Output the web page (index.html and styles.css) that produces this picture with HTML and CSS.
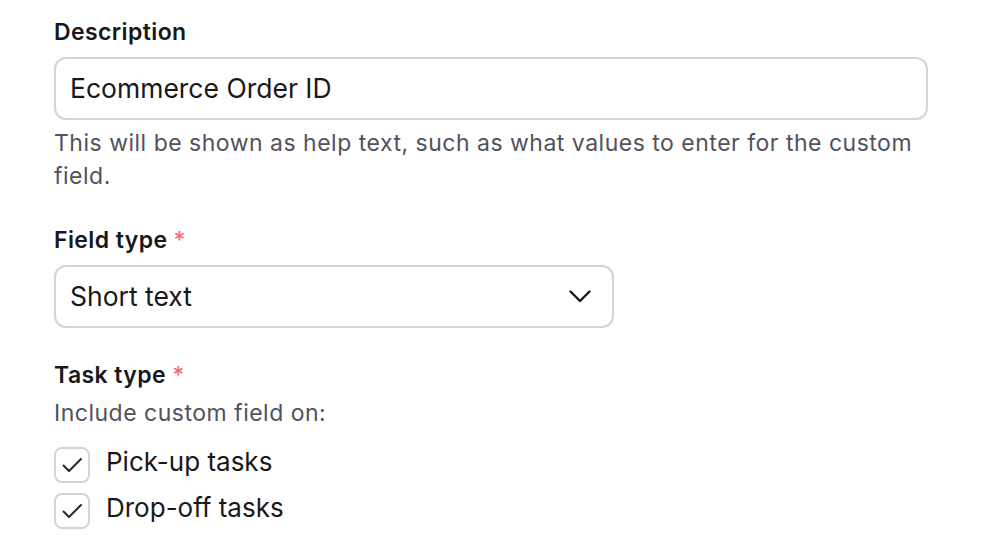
FILE: index.html
```html
<!DOCTYPE html>
<html>
<head>
<meta charset="utf-8">
<link rel="stylesheet" href="styles.css">
</head>
<body>
<form class="form">
  <div class="field">
    <label class="label">Description</label>
    <div class="input">Ecommerce Order ID</div>
    <p class="help">This will be shown as help text, such as what values to enter for the custom field.</p>
  </div>
  <div class="field">
    <label class="label">Field type <span class="req">*</span></label>
    <div class="input select">
      <span>Short text</span>
      <svg class="chev" width="24" height="24" viewBox="0 0 24 24"><path d="M2.5 7.5l9.5 9.5 9.5-9.5" fill="none" stroke="#18181b" stroke-width="2.4" stroke-linecap="round" stroke-linejoin="round"/></svg>
    </div>
  </div>
  <div class="field">
    <label class="label">Task type <span class="req">*</span></label>
    <p class="sub">Include custom field on:</p>
    <div class="checks">
      <div class="check"><span class="box"><svg width="32" height="32" viewBox="0 0 32 32"><path d="M7.5 16.5l5.5 5.5 12-12" fill="none" stroke="#27272a" stroke-width="2" stroke-linecap="round" stroke-linejoin="round"/></svg></span><span class="check-text">Pick-up tasks</span></div>
      <div class="check"><span class="box"><svg width="32" height="32" viewBox="0 0 32 32"><path d="M7.5 16.5l5.5 5.5 12-12" fill="none" stroke="#27272a" stroke-width="2" stroke-linecap="round" stroke-linejoin="round"/></svg></span><span class="check-text">Drop-off tasks</span></div>
    </div>
  </div>
</form>
</body>
</html>
```
FILE: styles.css
```css
* { box-sizing: border-box; }
body {
  margin: 0;
  background: #fff;
  font-family: Inter, "Noto Sans", sans-serif;
  color: #18181b;
}
.form {
  padding: 17px 54px 0 54px;
  display: flex;
  flex-direction: column;
  gap: 32px;
}
.field {
  display: flex;
  flex-direction: column;
}
.label {
  font-size: 23px;
  font-weight: 600;
  letter-spacing: 0.4px;
  line-height: 30px;
  margin-bottom: 10px;
}
.req { color: #ef6f6f; font-weight: 500; }
.input {
  width: 874px;
  height: 63px;
  border: 2px solid #d4d4d8;
  border-radius: 12px;
  padding: 0 14px 2px 14px;
  display: flex;
  align-items: center;
  font-size: 26.5px;
}
.select {
  width: 560px;
  justify-content: space-between;
  padding-right: 20px;
}
.chev { display: block; }
.help {
  margin: 7px 0 0 0;
  font-size: 23px;
  letter-spacing: 0.5px;
  line-height: 33px;
  color: #52525b;
  width: 874px;
}
.sub {
  margin: -2px 0 18px 0;
  font-size: 23px;
  letter-spacing: 0.5px;
  line-height: 30px;
  color: #52525b;
}
.checks {
  display: flex;
  flex-direction: column;
  gap: 9px;
}
.check {
  display: flex;
  align-items: center;
  gap: 16px;
  font-size: 26px;
}
.check-text { margin-bottom: 6px; }
.box {
  width: 36px;
  height: 36px;
  border: 2px solid #d4d4d8;
  border-radius: 8px;
  display: block;
}
.box svg { display: block; }
```
